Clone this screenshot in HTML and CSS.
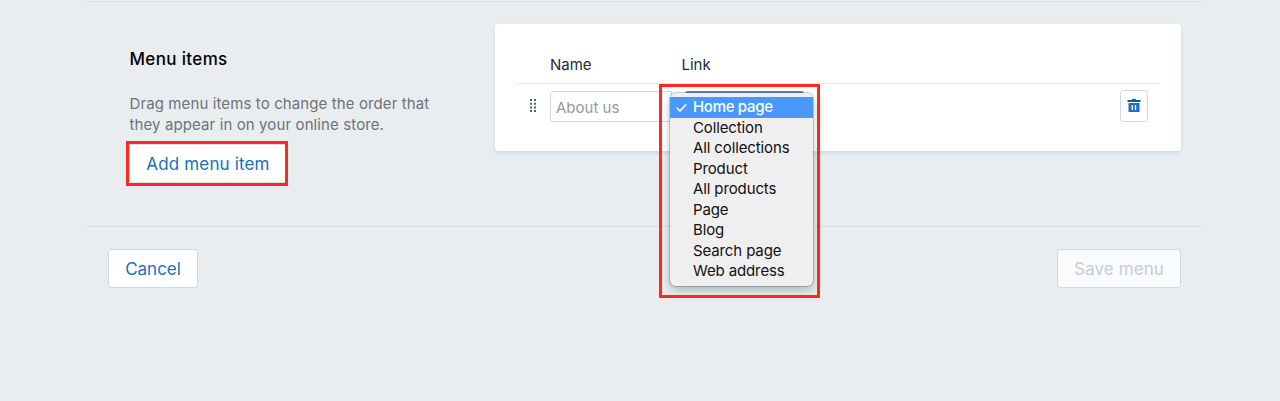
FILE: index.html
```html
<!DOCTYPE html>
<html lang="en">
<head>
<meta charset="utf-8">
<title>Menu items</title>
<link rel="stylesheet" href="styles.css">
</head>
<body>
<main class="page">
  <section class="section">
    <div class="intro">
      <h2 class="title">Menu items</h2>
      <p class="description">Drag menu items to change the order that<br>they appear in on your online store.</p>
      <div class="highlight"><button class="add"><span>Add menu item</span></button></div>
    </div>
    <div class="card">
      <div class="head"><span class="head-name">Name</span><span class="head-link">Link</span></div>
      <div class="row">
        <svg class="drag" width="8" height="14" viewBox="0 0 8 14" fill="#4c6579">
          <path d="M1 0h2v2H1zM5 0h2v2H5zM1 3.7h2v2H1zM5 3.7h2v2H5zM1 7.4h2v2H1zM5 7.4h2v2H5zM1 11.1h2v2H1zM5 11.1h2v2H5z"/>
        </svg>
        <div class="field"><span>About us</span></div>
        <div class="select">
          <div class="popup-frame">
            <ul class="popup">
              <li class="option selected"><svg class="check" width="11" height="10" viewBox="0 0 11 10" fill="none" stroke="#fff" stroke-width="1.6" stroke-linecap="round" stroke-linejoin="round"><path d="M1.2 5.2 4 8 9.8 1.8"/></svg><span>Home page</span></li>
              <li class="option"><span>Collection</span></li>
              <li class="option"><span>All collections</span></li>
              <li class="option"><span>Product</span></li>
              <li class="option"><span>All products</span></li>
              <li class="option"><span>Page</span></li>
              <li class="option"><span>Blog</span></li>
              <li class="option"><span>Search page</span></li>
              <li class="option"><span>Web address</span></li>
            </ul>
          </div>
        </div>
        <button class="delete" aria-label="Delete">
          <svg width="14" height="14" viewBox="0 0 14 14">
            <path fill="#0c5cae" d="M5 0h4v1h4.5v2H.5V1H5z"/>
            <path fill="#1672c5" fill-rule="evenodd" d="M1.5 4h11v9h-11zM4.6 6v5H6V6zm3.2 0v5h1.4V6z"/>
          </svg>
        </button>
      </div>
    </div>
  </section>
  <footer class="footer">
    <button class="button cancel"><span>Cancel</span></button>
    <button class="button save" disabled><span>Save menu</span></button>
  </footer>
</main>
</body>
</html>
```

FILE: styles.css
```css
* { box-sizing: border-box; }
body {
  margin: 0;
  height: 401px;
  overflow: hidden;
  background: #e9edf0;
  font-family: Inter, "Liberation Sans", sans-serif;
  font-weight: 385;
  color: #212b36;
}
button { font-family: inherit; font-weight: inherit; margin: 0; padding: 0; }
.page { width: 1116px; margin-left: 86px; padding-top: 1px; }
.section {
  display: flex;
  height: 225px;
  border-top: 1px solid #d9dde1;
}
.intro { width: 409px; padding: 45px 0 0 43.5px; }
.title { margin: 0; font-size: 17px; line-height: 24px; font-weight: 500; letter-spacing: 0.35px; color: #000; }
.description { margin: 22px 0 0; font-size: 15px; line-height: 21px; letter-spacing: 0.11px; color: #6e7376; white-space: nowrap; }
.highlight { width: 162px; height: 45px; margin: 6px 0 0 -3.5px; border: 3px solid #fc2b1d; }
.add {
  display: block; width: 100%; height: 100%; padding: 1px 0 0 1px;
  border: solid #d9dfe5; border-width: 1px 0 1px 1px;
  background: #fff; color: #1b6fb9;
  font-size: 17px; letter-spacing: 0.15px;
}
.card {
  width: 686px; height: 127px; margin-top: 22px; padding: 0 21px;
  background: #fff; border-radius: 4px;
  box-shadow: 0 2px 4px rgba(40, 60, 80, 0.13);
}
.head {
  display: flex; height: 60px; padding: 30px 0 0 34px;
  border-bottom: 1px solid #e8ebee;
  font-size: 15px; line-height: 22px;
}
.head-name { width: 131.5px; }
.row { display: flex; padding: 7px 12px 0 13px; }
.drag { margin: 8px 13px 0 0; flex: none; }
.field {
  width: 122px; height: 31px; padding-left: 5px;
  border: 1px solid #cfd8df; border-radius: 3px 0 0 3px;
  font-size: 15px; line-height: 31px; color: #999;
}
.select {
  position: relative; width: 138px; height: 31px; padding: 0 6px 0 13px;
}
.select::before { content: ""; display: block; height: 3px; background: #648abd; border-radius: 3px 3px 0 0; }
.popup-frame {
  position: absolute; left: -13px; top: -7px;
  width: 161px; height: 214px; padding: 6px 4px 9px 8px;
  border: 3px solid #fc2b1d;
}
.popup {
  height: 193px; margin: 0; padding: 4px 0; list-style: none;
  background: #efefef; border-radius: 6px;
  box-shadow: 0 0 0 1px rgba(0, 0, 0, 0.17), 0 4px 10px rgba(0, 0, 0, 0.25);
}
.option { position: relative; height: 20.5px; padding-left: 23px; font-size: 15px; line-height: 20.5px; letter-spacing: -0.12px; font-weight: 400; color: #111; white-space: nowrap; }
.selected { background: #4899fb; color: #fff; font-weight: 500; letter-spacing: -0.3px; }
.check { position: absolute; left: 6px; top: 6px; }
.delete {
  display: flex; align-items: center; justify-content: center;
  width: 28px; height: 32px; margin: -1px 0 0 auto;
  border: 1px solid #ced9e3; border-radius: 3px; background: #fff;
}
.footer {
  display: flex; justify-content: space-between;
  padding: 22px 21px 0 22px; border-top: 1px solid #d9dde1;
}
.button { height: 39px; border: 1px solid #d0dae2; border-radius: 3px; font-size: 17px; }
.cancel { width: 90px; background: #fff; color: #1b70bb; }
.save { width: 124px; background: #fafbfc; color: #c3ced8; letter-spacing: 0.1px; }
```
